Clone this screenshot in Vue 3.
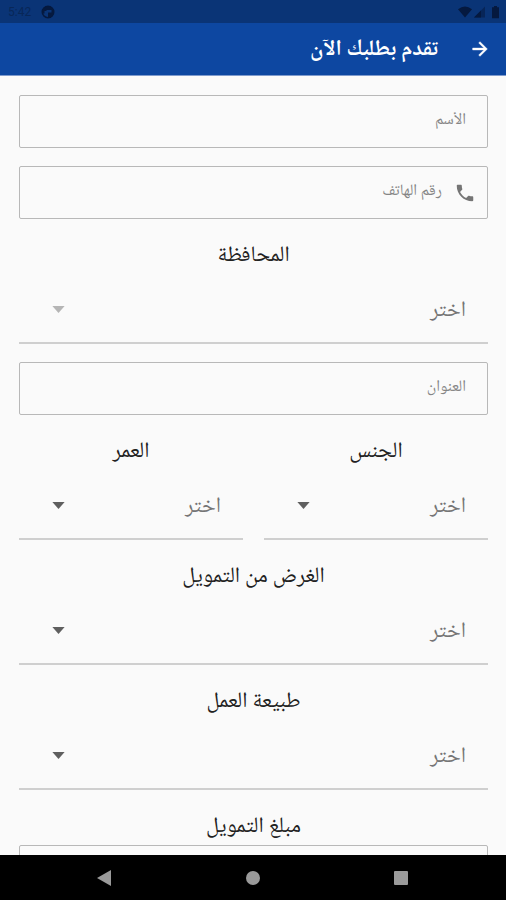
<script setup>
import { reactive } from 'vue'

const form = reactive({
  name: '',
  phone: '',
  province: '',
  address: '',
  gender: '',
  age: '',
  purpose: '',
  work: '',
  amount: '',
})

const rows = [
  [{ key: 'gender', label: 'الجنس' }, { key: 'age', label: 'العمر' }],
  [{ key: 'purpose', label: 'الغرض من التمويل' }],
  [{ key: 'work', label: 'طبيعة العمل' }],
]
</script>

<template>
  <div class="screen" dir="rtl" lang="ar">
    <div class="status" dir="ltr">
      <span class="clock">5:42</span>
      <svg class="status-app" viewBox="0 0 14 14" aria-hidden="true">
        <circle cx="7" cy="7" r="5.700" fill="none" stroke="currentColor" stroke-width="1.600" />
        <path d="M2 3.500Q7 -1 12 3.500L12.500 5H5.500V6H3.500V8.500H1.500Z" fill="currentColor" />
        <path d="M7 7.500H10.500V5H13V8Q12 12.500 7 13Z" fill="currentColor" />
      </svg>
      <span class="spacer"></span>
      <svg class="status-icons" viewBox="0 0 42 14" aria-hidden="true">
        <path d="M0 4.200Q7 -1.200 14 4.200L7 12.500Z" fill="currentColor" />
        <path d="M16 12.500L27 1.500V12.500Z" fill="currentColor" opacity=".55" />
        <path d="M16 12.500L23 5.500V12.500Z" fill="currentColor" />
        <path d="M34 2.200h2V1h3v1.200h2v11h-7Z" fill="currentColor" />
      </svg>
    </div>

    <header class="appbar">
      <button class="back" type="button" aria-label="رجوع">
        <svg viewBox="0 0 24 24" aria-hidden="true">
          <path d="M12 4l-1.410 1.410L16.170 11H4v2h12.170l-5.580 5.590L12 20l8-8z" fill="currentColor" stroke="currentColor" stroke-width=".5" />
        </svg>
      </button>
      <h1>تقدم بطلبك الآن</h1>
    </header>

    <main class="content">
      <form class="form" @submit.prevent>
        <div class="box">
          <input v-model="form.name" type="text" placeholder="الأسم" aria-label="الأسم" />
        </div>
        <div class="box">
          <svg class="phone" viewBox="0 0 24 24" aria-hidden="true">
            <path d="M6.620 10.790c1.440 2.830 3.760 5.140 6.590 6.590l2.200-2.200c.27-.27.67-.36 1.020-.24 1.120.37 2.330.57 3.570.57.55 0 1 .45 1 1V20c0 .55-.45 1-1 1-9.390 0-17-7.610-17-17 0-.55.45-1 1-1h3.500c.55 0 1 .45 1 1 0 1.250.2 2.450.57 3.570.11.35.03.74-.25 1.020l-2.200 2.200z" fill="currentColor" />
          </svg>
          <input v-model="form.phone" type="tel" dir="rtl" placeholder="رقم الهاتف" aria-label="رقم الهاتف" />
        </div>

        <div class="group">
          <label for="province">المحافظة</label>
          <div class="select muted">
            <select id="province" v-model="form.province">
              <option value="">اختر</option>
            </select>
            <svg viewBox="0 0 14 8" aria-hidden="true"><path d="M0 0h14L7 8z" fill="currentColor" /></svg>
          </div>
        </div>

        <div class="box">
          <input v-model="form.address" type="text" placeholder="العنوان" aria-label="العنوان" />
        </div>

        <div v-for="(row, i) in rows" :key="i" class="row">
          <div v-for="f in row" :key="f.key" class="group">
            <label :for="f.key">{{ f.label }}</label>
            <div class="select">
              <select :id="f.key" v-model="form[f.key]">
                <option value="">اختر</option>
              </select>
              <svg viewBox="0 0 14 8" aria-hidden="true"><path d="M0 0h14L7 8z" fill="currentColor" /></svg>
            </div>
          </div>
        </div>

        <div class="group">
          <label for="amount">مبلغ التمويل</label>
          <div class="box">
            <input id="amount" v-model="form.amount" type="text" inputmode="numeric" />
          </div>
        </div>
      </form>
    </main>

    <nav class="navbar" dir="ltr">
      <button type="button" aria-label="السابق">
        <svg viewBox="0 0 16 16"><path d="M1 8L15 0v16z" fill="currentColor" /></svg>
      </button>
      <button type="button" aria-label="الرئيسية">
        <svg viewBox="0 0 16 16"><circle cx="8" cy="8" r="7" fill="currentColor" /></svg>
      </button>
      <button type="button" aria-label="التطبيقات">
        <svg viewBox="0 0 16 16"><rect x="1" y="1" width="14" height="14" rx="1" fill="currentColor" /></svg>
      </button>
    </nav>
  </div>
</template>

<style>
body {
  margin: 0;
  background: #fafafa;
}
</style>

<style scoped>
.screen {
  display: flex;
  flex-direction: column;
  height: 100vh;
  overflow: hidden;
  background: #fafafa;
  color: #212121;
  font-family: "Noto Naskh Arabic UI", "Noto Naskh Arabic", "Noto Sans Arabic", "DejaVu Sans", sans-serif;
}
.screen * {
  box-sizing: border-box;
}
button,
input,
select {
  margin: 0;
  padding: 0;
  border: 0;
  background: none;
  font-family: inherit;
}
svg {
  display: block;
  flex: none;
}
.status {
  display: flex;
  flex: none;
  align-items: center;
  gap: 10px;
  height: 23px;
  padding: 0 6px 0 8px;
  background: #0a3476;
  color: #05193f;
}
.clock {
  color: #082758;
  font: 12px/16px Roboto, sans-serif;
}
.spacer {
  flex: 1;
}
.status-app {
  width: 14px;
  height: 14px;
}
.status-icons {
  width: 42px;
  height: 14px;
}
.appbar {
  display: flex;
  flex: none;
  align-items: center;
  gap: 31px;
  height: 53px;
  padding: 0 15px;
  border-bottom: 1px solid #7f9bcd;
  background: #0d47a1;
  color: #fff;
}
.back {
  color: inherit;
}
.back svg {
  width: 22px;
  height: 22px;
}
h1 {
  margin: 0;
  font-size: 22px;
  font-weight: 700;
  line-height: 28px;
}
.content {
  flex: 1;
  min-height: 0;
  overflow: hidden;
}
.form {
  display: flex;
  flex-direction: column;
  gap: 18px;
  padding: 19px 18px 18px 19px;
}
.box {
  display: flex;
  align-items: center;
  gap: 12px;
  height: 53px;
  padding: 0 21px;
  border: 1px solid #b8b8b8;
  border-radius: 2px;
}
.box:has(.phone) {
  padding-right: 11px;
}
.phone {
  width: 22px;
  height: 22px;
  color: #757575;
}
.box input {
  flex: 1;
  min-width: 0;
  height: 100%;
  padding-bottom: 4px;
  color: #212121;
  font-size: 16px;
  outline: none;
}
.box input::placeholder {
  color: #858585;
  opacity: 1;
}
.row {
  display: flex;
  gap: 21px;
}
.group {
  display: flex;
  flex: 1;
  flex-direction: column;
  min-width: 0;
}
.group label {
  font-size: 22px;
  line-height: 37px;
  text-align: center;
}
.select {
  position: relative;
  height: 70px;
  border-bottom: 2px solid #cfcfcf;
  color: #5f5f5f;
}
.select select {
  width: 100%;
  height: 100%;
  padding: 3px 22px 0;
  appearance: none;
  color: #757575;
  font-size: 22px;
  outline: none;
}
.select svg {
  position: absolute;
  top: 32px;
  left: 33px;
  width: 13px;
  height: 7px;
  pointer-events: none;
}
.select.muted {
  color: #b5b5b5;
}
.navbar {
  display: flex;
  flex: none;
  align-items: center;
  justify-content: space-between;
  height: 45px;
  padding: 0 97px 0 96px;
  background: #000;
}
.navbar button {
  color: #9a9a9a;
}
.navbar svg {
  width: 16px;
  height: 16px;
}
</style>
